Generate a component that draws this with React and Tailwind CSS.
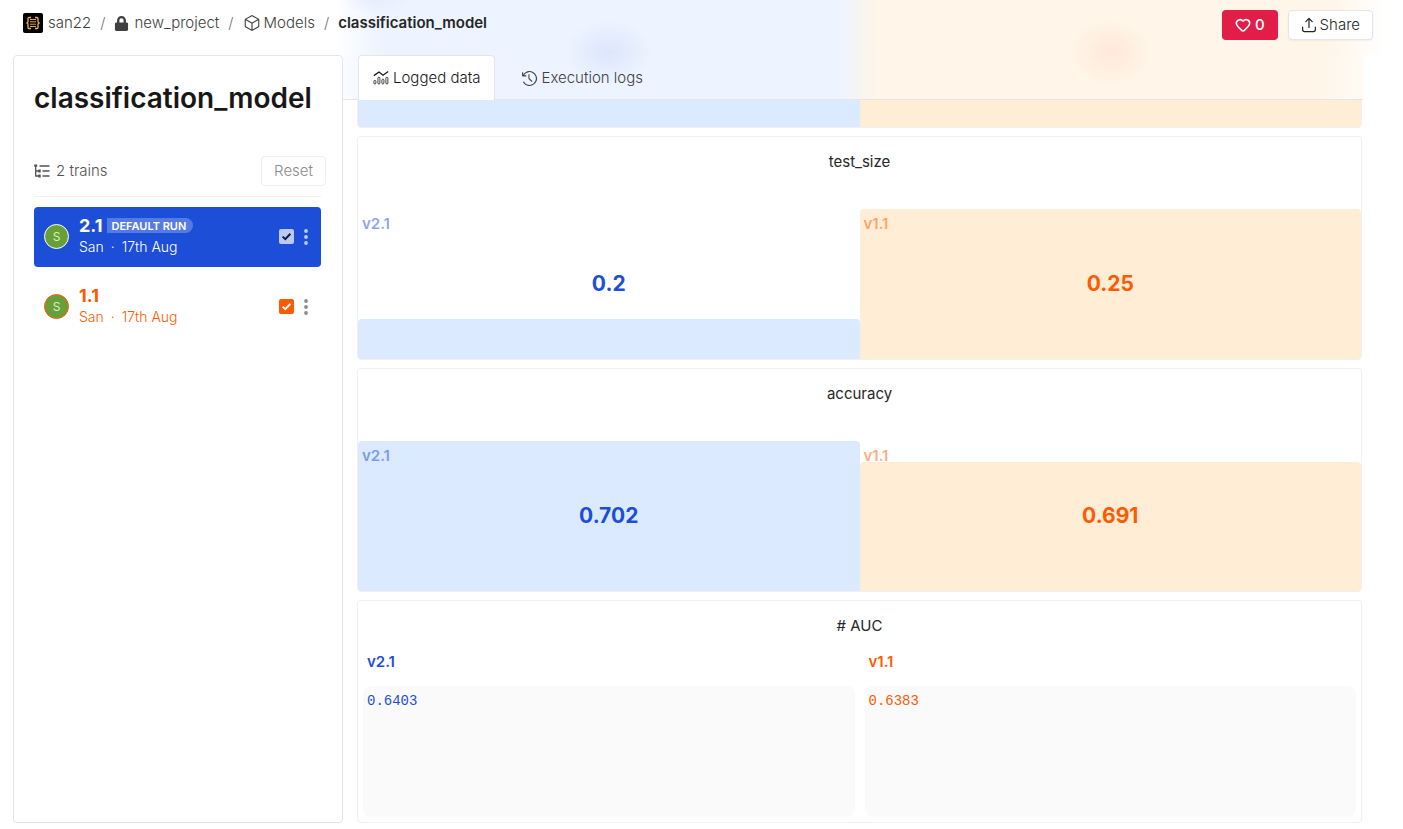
import { useState } from "react";
import clsx from "clsx";
import { Heart } from "lucide-react";
import { FaLock } from "react-icons/fa";
import { VscHistory } from "react-icons/vsc";
import { PiCube } from "react-icons/pi";

const runs = [
  { version: "2.1", author: "San", date: "17th Aug", isDefault: true },
  { version: "1.1", author: "San", date: "17th Aug", isDefault: false },
];

const metrics = [
  {
    name: "test_size",
    values: [
      { version: "v2.1", value: "0.2", fill: "27%" },
      { version: "v1.1", value: "0.25", fill: "100%" },
    ],
  },
  {
    name: "accuracy",
    values: [
      { version: "v2.1", value: "0.702", fill: "100%" },
      { version: "v1.1", value: "0.691", fill: "86%" },
    ],
  },
];

const textColors = ["text-[#1d4ed8]", "text-[#ff5a00]"];
const barColors = ["bg-[#dbeafe]", "bg-[#ffedd5]"];

const ProjectLogo = () => (
  <svg viewBox="0 0 20 20" className="size-5" aria-hidden="true">
    <rect width="20" height="20" rx="2" fill="#000" />
    <g fill="none" stroke="#f5b544">
      <path d="M8 4.5H6Q5 4.5 5 5.5V8.5Q5 10 3.4 10Q5 10 5 11.5V14.5Q5 15.5 6 15.5H8" strokeWidth="1.3" />
      <path d="M12 4.5H14Q15 4.5 15 5.5V8.5Q15 10 16.6 10Q15 10 15 11.5V14.5Q15 15.5 14 15.5H12" strokeWidth="1.3" />
      <path d="M7 6.5H13M7 8.8H13M7 11.2H13M7 13.5H13" strokeWidth=".9" />
    </g>
  </svg>
);

const ChartIcon = () => (
  <svg
    viewBox="0 0 16 16"
    className="size-4"
    fill="none"
    stroke="currentColor"
    aria-hidden="true"
  >
    <path d="M.8 5.6L6 2L10 5.2L15.2 1.4" strokeWidth="1.3" />
    <g strokeWidth=".8">
      <rect x=".9" y="10.4" width="2" height="3.6" rx="1" />
      <rect x="4.9" y="7.2" width="2" height="6.8" rx="1" />
      <rect x="8.9" y="9.2" width="2" height="4.8" rx="1" />
      <rect x="12.9" y="7.2" width="2" height="6.8" rx="1" />
    </g>
  </svg>
);

const TreeIcon = () => (
  <svg
    viewBox="0 0 16 16"
    className="size-4"
    fill="none"
    stroke="currentColor"
    strokeWidth="1.3"
    aria-hidden="true"
  >
    <path d="M1.7 2V13H5M1.7 8H5M5.5 3H15.5M8.5 8H15.5M8.5 13H15.5" />
    <path d="M.2 2.6H3.2M5.5 6.5V9.5M5.5 11.5V14.5" strokeWidth="2.4" />
  </svg>
);

const ShareIcon = () => (
  <svg
    viewBox="0 0 16 16"
    className="size-4"
    fill="none"
    stroke="currentColor"
    strokeWidth="1.2"
    strokeLinecap="round"
    strokeLinejoin="round"
    aria-hidden="true"
  >
    <path d="M8 10.5V1.5M4.8 4.6L8 1.4L11.2 4.6" />
    <path d="M1.6 10V12.6Q1.6 14.6 3.6 14.6H12.4Q14.4 14.6 14.4 12.6V10" />
  </svg>
);

const DotsIcon = () => (
  <svg viewBox="0 0 4 16" className="h-4 w-1" fill="currentColor" aria-hidden="true">
    <circle cx="2" cy="2" r="1.9" />
    <circle cx="2" cy="8" r="1.9" />
    <circle cx="2" cy="14" r="1.9" />
  </svg>
);

const Header = () => (
  <header className="flex h-[55px] items-start justify-between bg-[radial-gradient(44px_32px_at_calc(258px+25%)_52px,#dce6fb,transparent),radial-gradient(40px_32px_at_calc(58px+75%)_52px,#ffe8d9,transparent),radial-gradient(36px_14px_at_376px_0,#e6eefd,transparent),linear-gradient(to_right,#fff_335px,#edf4ff_380px,#edf4ff_calc(138px+50%),#fff5e8_calc(176px+50%),#fff5e8_calc(100%-75px),#fff_calc(100%-18px))] pr-[30px] pl-[23px]">
    <nav aria-label="Breadcrumb" className="flex h-[46px] items-center gap-2 font-light text-[#404040]">
      <a href="#user" className="flex items-center gap-[5px]">
        <ProjectLogo />
        san22
      </a>
      <span className="px-px text-[#737373]">/</span>
      <a href="#project" className="flex items-center gap-[5px]">
        <FaLock className="size-[15px]" />
        new_project
      </a>
      <span className="px-px text-[#737373]">/</span>
      <a href="#models" className="flex items-center gap-[3px]">
        <PiCube className="size-[18px]" />
        Models
      </a>
      <span className="px-px text-[#737373]">/</span>
      <a href="#model" className="font-semibold text-[#262626]">
        classification_model
      </a>
    </nav>
    <div className="flex gap-[10px] pt-[10px]">
      <button
        type="button"
        aria-label="Like"
        className="flex h-[30px] items-center gap-1 rounded bg-[#e11d48] px-[13px] font-medium text-white"
      >
        <Heart className="size-4" strokeWidth={2.5} />0
      </button>
      <button
        type="button"
        className="flex h-[30px] items-center gap-[3px] rounded border border-[#e5e5e5] bg-white px-3 font-light text-[#262626] shadow-xs"
      >
        <ShareIcon />
        Share
      </button>
    </div>
  </header>
);

const RunItem = ({ run, index, checked, onToggle }) => (
  <li
    className={clsx(
      "flex h-[60px] items-center rounded px-[10px] pb-px",
      run.isDefault ? "bg-[#1d4ed8] text-white" : "text-[#ff5a00]"
    )}
  >
    <span
      className={clsx(
        "flex size-[25px] items-center justify-center rounded-full border bg-[#689f38] text-xs text-[#dcedc8]",
        run.isDefault ? "border-white" : "border-[#ff5a00]"
      )}
    >
      S
    </span>
    <div className="ml-[10px] flex-1">
      <div className="flex h-5 items-center gap-[5px]">
        <span className="text-lg font-bold">{run.version}</span>
        {run.isDefault && (
          <span className="flex h-[15px] items-center rounded-r-full bg-white/25 pr-[7px] pl-1 text-[11px] font-semibold">
            DEFAULT RUN
          </span>
        )}
      </div>
      <div className="flex h-[22px] items-center gap-[7px] text-sm font-light">
        <span>{run.author}</span>
        <span>·</span>
        <span>{run.date}</span>
      </div>
    </div>
    <label className="relative flex size-[15px]">
      <input
        type="checkbox"
        aria-label={`Compare run ${run.version}`}
        checked={checked}
        onChange={() => onToggle(index)}
        className={clsx(
          "size-[15px] appearance-none rounded-[2px]",
          run.isDefault ? "bg-[#bbcaf3]" : "bg-[#ff5a00]"
        )}
      />
      {checked && (
        <svg
          viewBox="0 0 15 15"
          className={clsx(
            "pointer-events-none absolute inset-0",
            run.isDefault ? "text-[#0b1a48]" : "text-white"
          )}
          fill="none"
          stroke="currentColor"
          strokeWidth="2"
          aria-hidden="true"
        >
          <path d="M3.6 7.6L6.3 10.2L11.4 4.8" />
        </svg>
      )}
    </label>
    <button
      type="button"
      aria-label="Run options"
      className={clsx("mr-[3px] ml-[10px]", run.isDefault ? "text-[#bbcaf3]" : "text-[#8c8c8c]")}
    >
      <DotsIcon />
    </button>
  </li>
);

const Sidebar = () => {
  const [selected, setSelected] = useState([true, true]);

  const toggle = (index) => {
    setSelected(selected.map((s, i) => (i === index ? !s : s)));
  };

  return (
    <aside className="flex w-[330px] shrink-0 flex-col rounded border border-[#e5e5e5] bg-white pt-5 pr-4 pl-5">
      <h1 className="text-[28px] leading-[44px] font-semibold text-[#171717]">
        classification_model
      </h1>
      <div className="mt-9 flex h-[30px] items-center justify-between font-light text-[#525252]">
        <span className="flex items-center gap-[6px]">
          <TreeIcon />2 trains
        </span>
        <button
          type="button"
          className="h-[30px] rounded border border-[#f0f0f0] px-3 font-light text-[#8c8c8c]"
        >
          Reset
        </button>
      </div>
      <ul className="mt-[10px] mr-[5px] flex flex-col gap-[10px] border-t border-[#f0f0f0] pt-[10px]">
        {runs.map((run, index) => (
          <RunItem
            key={run.version}
            run={run}
            index={index}
            checked={selected[index]}
            onToggle={toggle}
          />
        ))}
      </ul>
    </aside>
  );
};

const Tabs = () => (
  <div
    role="tablist"
    className="flex h-[45px] border-b border-[#e5e5e5] bg-[radial-gradient(44px_32px_at_calc(10px+25%)_-3px,#dce6fb,transparent),radial-gradient(40px_32px_at_calc(2px+75%)_-3px,#ffe8d9,transparent),linear-gradient(to_right,#fafcff,#edf4ff_37px,#edf4ff_calc(50%-14px),#fff5e8_calc(50%+24px),#fff5e8_calc(100%-54px),#fffaf3)] pl-[15px]"
  >
    <button
      type="button"
      role="tab"
      aria-selected="true"
      className="-mb-px flex items-center gap-1 rounded-t border border-b-0 border-[#e5e5e5] bg-white px-[14px] font-light text-[#171717]"
    >
      <ChartIcon />
      Logged data
    </button>
    <button
      type="button"
      role="tab"
      aria-selected="false"
      className="-mb-px flex items-center gap-[3px] border-t border-transparent px-[26px] font-light text-[#404040]"
    >
      <VscHistory className="size-[17px]" />
      Execution logs
    </button>
  </div>
);

const MetricCard = ({ metric }) => (
  <section className="h-56 overflow-hidden rounded border border-[#f0f0f0]">
    <h2 className="h-[72px] pt-[14px] text-center text-[#262626]">{metric.name}</h2>
    <div className="grid h-[150px] grid-cols-2">
      {metric.values.map((item, index) => (
        <div key={item.version} className={clsx("relative", textColors[index])}>
          <div
            className={clsx("absolute inset-x-0 bottom-0 rounded-t", barColors[index])}
            style={{ height: item.fill }}
          />
          <span className="absolute top-1 left-1 font-semibold opacity-50">
            {item.version}
          </span>
          <div className="relative flex h-full items-center justify-center pb-px text-[21px] font-bold">
            {item.value}
          </div>
        </div>
      ))}
    </div>
  </section>
);

const LogCard = () => (
  <section className="flex h-[223px] flex-col rounded border border-[#f0f0f0]">
    <h2 className="h-[50px] pt-[14px] text-center text-[#262626]"># AUC</h2>
    <div className="grid flex-1 grid-cols-2">
      {["0.6403", "0.6383"].map((value, index) => (
        <div key={value} className={clsx("flex flex-col px-[5px] pb-[5px]", textColors[index])}>
          <span className="h-[35px] pl-1 font-semibold">v{runs[index].version}</span>
          <pre className="flex-1 rounded-lg bg-[#fafafa] px-1 py-[5px] font-['Liberation_Mono',monospace] text-sm">
            {value}
          </pre>
        </div>
      ))}
    </div>
  </section>
);

export default function App() {
  return (
    <div className="flex min-h-screen flex-col bg-white font-['Inter',sans-serif] text-[15px] leading-[22px]">
      <Header />
      <div className="flex flex-1 pr-10 pb-[7px] pl-[13px]">
        <Sidebar />
        <main className="flex min-w-0 flex-1 flex-col">
          <Tabs />
          <div className="flex flex-col gap-2 pr-px pl-[14px]">
            <div className="grid h-7 grid-cols-2 overflow-hidden rounded-b border border-t-0 border-[#f0f0f0]">
              <div className="bg-[#dbeafe]" />
              <div className="bg-[#ffedd5]" />
            </div>
            {metrics.map((metric) => (
              <MetricCard key={metric.name} metric={metric} />
            ))}
            <LogCard />
          </div>
        </main>
      </div>
    </div>
  );
}
